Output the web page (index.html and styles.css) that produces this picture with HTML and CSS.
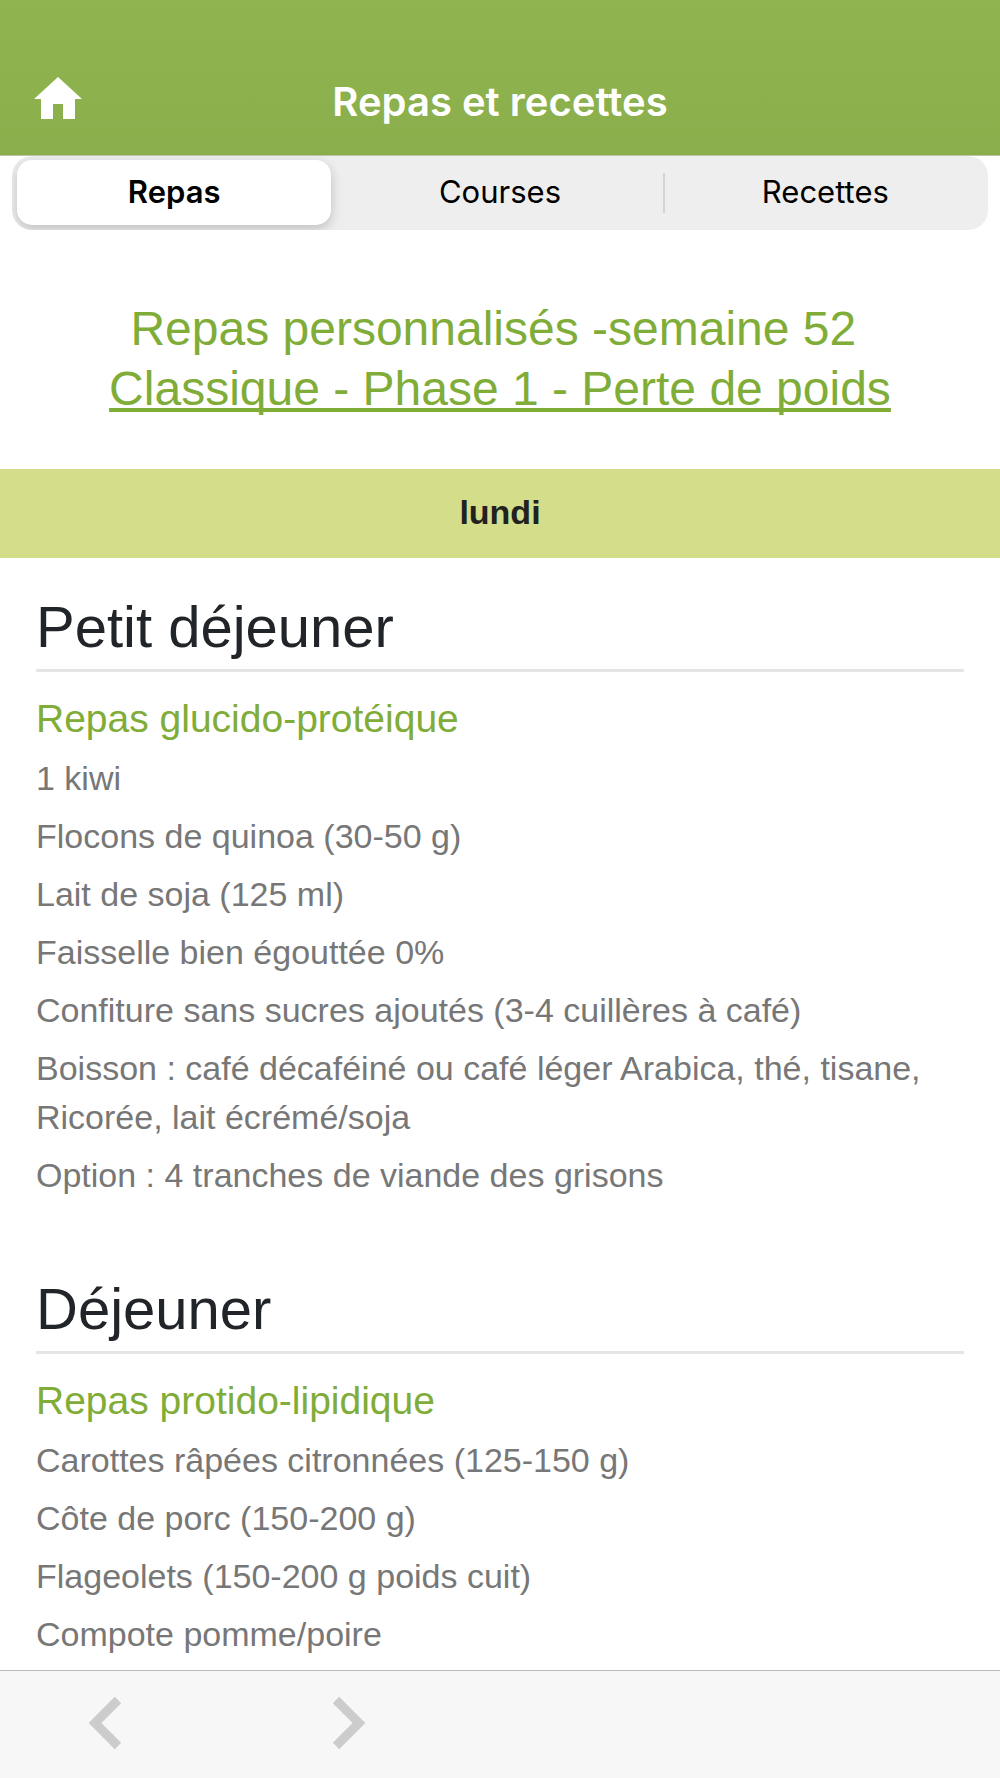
FILE: index.html
```html
<!DOCTYPE html>
<html lang="fr">

<head>
    <meta charset="UTF-8">
    <meta name="viewport" content="width=device-width, initial-scale=1.0">
    <title>Repas et recettes</title>
    <link rel="stylesheet" href="styles.css">
</head>

<body>

    <header class="header">
        <a href="#" class="home" aria-label="Accueil">
            <svg width="48" height="42" viewBox="0 0 48 42" fill="#fff">
                <path d="M24 0L48 22H41V42H29V27H19V42H7V22H0Z"/>
            </svg>
        </a>
        <h1>Repas et recettes</h1>
    </header>

    <nav class="tabs">
        <button type="button" class="tab active">Repas</button>
        <button type="button" class="tab">Courses</button>
        <button type="button" class="tab divided">Recettes</button>
    </nav>

    <main>
        <div class="plan-title">
            <div class="week">Repas personnalisés -semaine 52&nbsp;</div>
            <a href="#">Classique - Phase 1 - Perte de poids</a>
        </div>

        <div class="day">lundi</div>

        <section class="meal">
            <h2>Petit déjeuner</h2>
            <h3>Repas glucido-protéique</h3>
            <p>1 kiwi</p>
            <p>Flocons de quinoa (30-50 g)</p>
            <p>Lait de soja (125 ml)</p>
            <p>Faisselle bien égouttée 0%</p>
            <p>Confiture sans sucres ajoutés (3-4 cuillères à café)</p>
            <p>Boisson : café décaféiné ou café léger Arabica, thé, tisane, Ricorée, lait écrémé/soja</p>
            <p>Option : 4 tranches de viande des grisons</p>
        </section>

        <section class="meal">
            <h2>Déjeuner</h2>
            <h3>Repas protido-lipidique</h3>
            <p>Carottes râpées citronnées (125-150 g)</p>
            <p>Côte de porc (150-200 g)</p>
            <p>Flageolets (150-200 g poids cuit)</p>
            <p>Compote pomme/poire</p>
        </section>
    </main>

    <footer class="toolbar">
        <button type="button" aria-label="Précédent">
            <svg width="34" height="54" viewBox="0 0 34 54" fill="none" stroke="#ccc" stroke-width="9">
                <path d="M30 4L7 27L30 50"/>
            </svg>
        </button>
        <button type="button" aria-label="Suivant">
            <svg width="34" height="54" viewBox="0 0 34 54" fill="none" stroke="#ccc" stroke-width="9">
                <path d="M4 4L27 27L4 50"/>
            </svg>
        </button>
    </footer>

</body>

</html>
```

FILE: styles.css
```css
* {
    box-sizing: border-box;
}

body {
    font-family: "Liberation Sans", Arial, sans-serif;
    margin: 0;
    height: 100vh;
    display: flex;
    flex-direction: column;
    background-color: #fff;
    color: #212529;
}

button {
    border: none;
    background: none;
    padding: 0;
    cursor: pointer;
}

svg {
    display: block;
}

/* Barre du haut */
.header {
    flex: none;
    display: grid;
    grid-template-columns: 48px 1fr 48px;
    align-items: center;
    height: 156px;
    padding: 48px 34px 0;
    background: linear-gradient(#90b550, #8aae4b);
    border-bottom: 1px solid #b9c6a2;
}

.home {
    margin-bottom: 8px;
}

h1 {
    margin: 0;
    font-family: Inter, sans-serif;
    font-size: 40px;
    font-weight: 600;
    line-height: 48px;
    text-align: center;
    color: #fff;
}

/* Onglets */
.tabs {
    flex: none;
    display: grid;
    grid-template-columns: repeat(3, 1fr);
    margin: 0 12px;
    padding: 4px 0 5px;
    background-color: #eee;
    border-radius: 20px;
    overflow: hidden;
}

.tab {
    height: 65px;
    padding-bottom: 2px;
    font-family: Inter, sans-serif;
    font-size: 31px;
    font-weight: 400;
    color: #000;
}

.tab.active {
    margin: 0 6px 0 5px;
    background-color: #fff;
    border-radius: 15px;
    font-weight: 600;
    box-shadow: 0 4px 12px rgba(0, 0, 0, 0.2);
}

.tab.divided {
    background: linear-gradient(#d4d4d4, #d4d4d4) left center / 2px 40px no-repeat;
}

/* Contenu */
main {
    flex: 1;
    min-height: 0;
    overflow: hidden;
}

.plan-title {
    padding: 69px 36px 50px;
    font-size: 48px;
    line-height: 60px;
    text-align: center;
    color: #80ac38;
}

.plan-title a {
    color: inherit;
    text-decoration-skip-ink: none;
}

.day {
    padding: 19px 20px 21px;
    background-color: #d3dd8a;
    color: #212121;
    font-size: 34px;
    font-weight: bold;
    line-height: 49px;
    text-align: center;
}

.meal {
    padding: 35px 36px 31px;
}

h2 {
    margin: 0 0 22px;
    padding-bottom: 8px;
    border-bottom: 3px solid #e5e5e5;
    font-size: 58px;
    font-weight: normal;
    line-height: 68px;
}

h3 {
    margin: 0 0 10px;
    font-size: 39px;
    font-weight: normal;
    line-height: 50px;
    color: #80ac38;
}

p {
    margin: 0 0 9px;
    font-size: 34px;
    line-height: 49px;
    color: #777;
}

/* Barre du bas */
.toolbar {
    flex: none;
    display: flex;
    gap: 210px;
    height: 108px;
    padding: 0 88px 4px;
    background-color: #f7f7f7;
    border-top: 1px solid #bbb;
}
```
